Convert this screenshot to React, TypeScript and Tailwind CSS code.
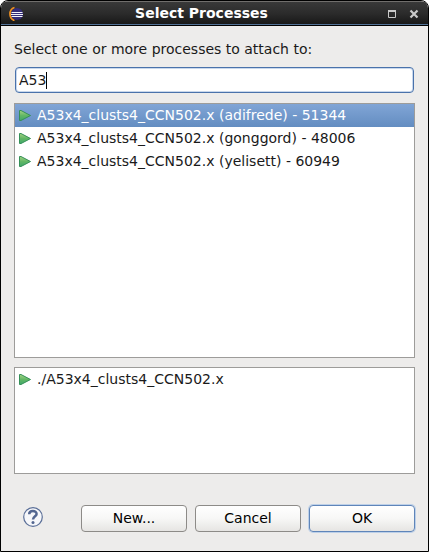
import { useState } from "react";

const processes = [
  "A53x4_clusts4_CCN502.x (adifrede) - 51344",
  "A53x4_clusts4_CCN502.x (gonggord) - 48006",
  "A53x4_clusts4_CCN502.x (yelisett) - 60949",
];

function EclipseIcon() {
  return (
    <svg className="h-[15px] w-[15px] shrink-0" viewBox="0 0 15 15" aria-hidden="true">
      <path d="M5.500 1.500C2.500 2.500 1 5 1 8s1.500 5.500 4.500 6.500" fill="none" stroke="#f09020" strokeWidth="1.800" />
      <circle cx="8" cy="8" r="6" fill="#352d78" />
      <path d="M2.500 6.500h11M2 8.500h12M2.500 10.500h11" stroke="#f2f2fa" strokeWidth="1" />
    </svg>
  );
}

function RunIcon() {
  return (
    <svg className="h-4 w-4 shrink-0" viewBox="0 0 16 16" aria-hidden="true">
      <defs>
        <linearGradient id="run" x1="0" y1="0" x2="0" y2="1">
          <stop offset="0" stopColor="#a4d283" />
          <stop offset="0.500" stopColor="#62b765" />
          <stop offset="1" stopColor="#3fa86a" />
        </linearGradient>
      </defs>
      <path d="M2.500 3.500v10h1.500L13.500 8.500 4 3.500z" fill="url(#run)" stroke="#359058" strokeWidth="1" strokeLinejoin="round" />
    </svg>
  );
}

function HelpIcon() {
  return (
    <svg className="h-5 w-5" viewBox="0 0 20 20" aria-hidden="true">
      <circle cx="10" cy="10" r="9.300" fill="#f6f7fa" stroke="#5b6f98" strokeWidth="1.200" />
      <path d="M6.200 7.200C6.200 3 13.600 3 13.600 7C13.600 9.300 10 9.400 10 12.600" fill="none" stroke="#536690" strokeWidth="2.500" />
      <circle cx="10" cy="15.400" r="1.500" fill="#536690" />
    </svg>
  );
}

const buttonClass =
  "h-[27px] w-[106px] rounded border border-[#8d8b88] bg-linear-to-b from-white via-[#f7f7f6] to-[#e6e5e3] pb-0.5 text-sm leading-5 text-black";

export default function App() {
  const [selected, setSelected] = useState(0);
  const [filter, setFilter] = useState("A53");

  return (
    <div className="bg-white font-['DejaVu_Sans',sans-serif] text-sm text-[#1a1a1a]">
      <main className="flex min-h-screen flex-col overflow-hidden rounded-t-lg border border-black bg-[#edeceb]">
        <header className="flex h-[25px] shrink-0 items-center border-t border-b border-t-[#706e6c] border-b-black bg-linear-to-b from-[#393939] via-[#2b2b2b] to-[#171717] pr-[9px] pl-2 shadow-[inset_0_-1px_0_#527296]">
          <EclipseIcon />
          <h1 className="flex-1 pr-2 pb-px text-center text-sm leading-5 font-bold text-white">Select Processes</h1>
          <div className="flex items-center gap-3">
            <button type="button" aria-label="Maximize" className="h-[10px] w-[10px]">
              <svg className="h-[10px] w-[10px]" viewBox="0 0 10 10">
                <path d="M1.500 1.500h7v7h-7z" fill="none" stroke="#c9c9c9" />
                <path d="M1 2h8" stroke="#c9c9c9" strokeWidth="2" />
              </svg>
            </button>
            <button type="button" aria-label="Close" className="h-[10px] w-[10px]">
              <svg className="h-[10px] w-[10px]" viewBox="0 0 10 10">
                <path d="M1.500 1.500l7 7M8.500 1.500l-7 7" stroke="#c9c9c9" strokeWidth="2.200" />
              </svg>
            </button>
          </div>
        </header>

        <div className="flex flex-1 flex-col px-[13px] pt-[13px] pb-[19px]">
          <label htmlFor="filter" className="leading-5 text-[#1a1a1a]">
            Select one or more processes to attach to:
          </label>
          <div className="relative mx-px mt-2 h-[26px]">
            <input
              id="filter"
              type="text"
              value={filter}
              onChange={(e) => setFilter(e.target.value)}
              className="block h-full w-full rounded border border-[#4a72ab] bg-white px-[3px] text-sm text-[#1a1a1a] caret-transparent shadow-[inset_0_0_0_1px_#c9d8ec] outline-none"
            />
            <span aria-hidden="true" className="pointer-events-none absolute inset-y-1 left-1 flex items-center">
              <span className="invisible">{filter}</span>
              <span className="h-[17px] w-px bg-black" />
            </span>
          </div>

          <ul role="listbox" aria-label="Processes" className="mt-[10px] min-h-[255px] flex-1 border border-[#9d9c9a] bg-white">
            {processes.map((name, i) => (
              <li
                key={name}
                role="option"
                aria-selected={i === selected}
                onClick={() => setSelected(i)}
                className={
                  i === selected
                    ? "flex h-[23px] items-center gap-1 bg-linear-to-b from-[#81a5d6] to-[#638dc1] px-[2px] pb-px text-white"
                    : "flex h-[23px] items-center gap-1 px-[2px] pb-px"
                }
              >
                <RunIcon />
                <span>{name}</span>
              </li>
            ))}
          </ul>

          <ul role="listbox" aria-label="Executable" className="mt-[9px] h-[107px] border border-[#9d9c9a] bg-white">
            <li role="option" aria-selected="false" className="flex h-[23px] items-center gap-1 px-[2px] pb-px">
              <RunIcon />
              <span>./A53x4_clusts4_CCN502.x</span>
            </li>
          </ul>

          <footer className="mt-[31px] flex items-start justify-between pl-[9px]">
            <button type="button" aria-label="Help" className="mt-0.5 h-5 w-5">
              <HelpIcon />
            </button>
            <div className="flex gap-2">
              <button type="button" className={buttonClass}>New...</button>
              <button type="button" className={buttonClass}>Cancel</button>
              <button type="button" className="h-[27px] w-[106px] rounded border border-[#5f85b9] bg-linear-to-b from-white via-[#f7f7f6] to-[#e6e5e3] pb-0.5 text-sm leading-5 text-black shadow-[0_0_0_1px_#bdd0e8]">
                OK
              </button>
            </div>
          </footer>
        </div>
      </main>
    </div>
  );
}
